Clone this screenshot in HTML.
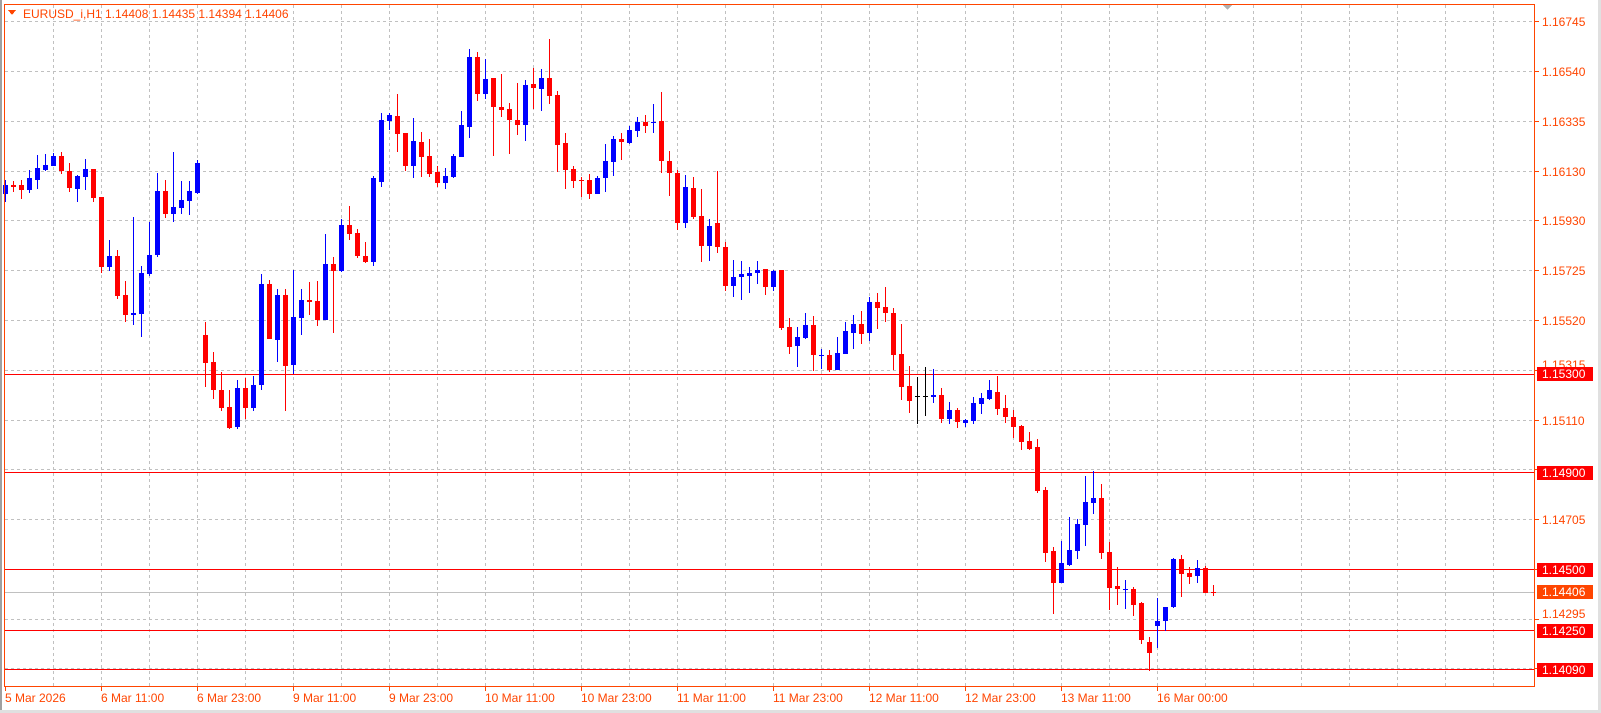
<!DOCTYPE html>
<html><head><meta charset="utf-8"><style>
html,body{margin:0;padding:0;background:#fff;}
body{width:1601px;height:713px;overflow:hidden;position:relative;font-family:"Liberation Sans",Tahoma,sans-serif;}
svg{position:absolute;left:0;top:0;}
text{font-family:"Liberation Sans",Tahoma,sans-serif;font-size:12px;}
</style></head><body>
<svg width="1601" height="713" viewBox="0 0 1601 713" xmlns="http://www.w3.org/2000/svg" shape-rendering="crispEdges">
<rect x="0" y="0" width="2" height="713" fill="#a0a0a0"/>
<rect x="1598" y="0" width="3" height="713" fill="#e0e0e0"/>
<rect x="0" y="710" width="1601" height="3" fill="#e0e0e0"/>
<g stroke="#c0c0c0" stroke-width="1" stroke-dasharray="3 3" fill="none">
<path d="M53.5 5V687M101.5 5V687M149.5 5V687M197.5 5V687M245.5 5V687M293.5 5V687M341.5 5V687M389.5 5V687M437.5 5V687M485.5 5V687M533.5 5V687M581.5 5V687M629.5 5V687M677.5 5V687M725.5 5V687M773.5 5V687M821.5 5V687M869.5 5V687M917.5 5V687M965.5 5V687M1013.5 5V687M1061.5 5V687M1109.5 5V687M1157.5 5V687M1205.5 5V687M1253.5 5V687M1301.5 5V687M1349.5 5V687M1397.5 5V687M1445.5 5V687M1493.5 5V687"/>
<path d="M5 21.5H1535M5 71.5H1535M5 121.5H1535M5 171.5H1535M5 220.5H1535M5 270.5H1535M5 320.5H1535M5 370.5H1535M5 420.5H1535M5 469.5H1535M5 519.5H1535M5 569.5H1535M5 619.5H1535M5 668.5H1535"/>
</g>
<rect x="5" y="374" width="1530" height="1" fill="#ff0000"/>
<rect x="5" y="472" width="1530" height="1" fill="#ff0000"/>
<rect x="5" y="569" width="1530" height="1" fill="#ff0000"/>
<rect x="5" y="592" width="1530" height="1" fill="#c0c0c0"/>
<rect x="5" y="630" width="1530" height="1" fill="#ff0000"/>
<rect x="5" y="669" width="1530" height="1" fill="#ff0000"/>
<g fill="#0000ff">
<path d="M5 180h1v22h-1zM3 185h5v9h-5z"/>
<path d="M29 170h1v23h-1zM27 178h5v12h-5z"/>
<path d="M37 155h1v34h-1zM35 168h5v12h-5z"/>
<path d="M45 154h1v17h-1zM43 165h5v5h-5z"/>
<path d="M53 153h1v13h-1zM51 156h5v10h-5z"/>
<path d="M77 175h1v27h-1zM75 176h5v13h-5z"/>
<path d="M85 159h1v31h-1zM83 169h5v8h-5z"/>
<path d="M109 240h1v31h-1zM107 256h5v11h-5z"/>
<path d="M133 217h1v108h-1zM131 313h5v2h-5z"/>
<path d="M141 266h1v71h-1zM139 273h5v41h-5z"/>
<path d="M149 222h1v54h-1zM147 255h5v19h-5z"/>
<path d="M157 173h1v84h-1zM155 191h5v64h-5z"/>
<path d="M173 152h1v70h-1zM171 207h5v7h-5z"/>
<path d="M181 181h1v33h-1zM179 200h5v8h-5z"/>
<path d="M189 181h1v34h-1zM187 191h5v10h-5z"/>
<path d="M197 160h1v34h-1zM195 163h5v30h-5z"/>
<path d="M237 380h1v49h-1zM235 388h5v39h-5z"/>
<path d="M253 376h1v35h-1zM251 385h5v23h-5z"/>
<path d="M261 274h1v116h-1zM259 284h5v101h-5z"/>
<path d="M277 289h1v73h-1zM275 295h5v45h-5z"/>
<path d="M293 270h1v104h-1zM291 317h5v48h-5z"/>
<path d="M301 289h1v46h-1zM299 300h5v18h-5z"/>
<path d="M325 234h1v86h-1zM323 264h5v56h-5z"/>
<path d="M341 219h1v53h-1zM339 225h5v46h-5z"/>
<path d="M373 176h1v90h-1zM371 178h5v84h-5z"/>
<path d="M381 113h1v74h-1zM379 120h5v62h-5z"/>
<path d="M389 113h1v17h-1zM387 115h5v6h-5z"/>
<path d="M413 118h1v60h-1zM411 141h5v25h-5z"/>
<path d="M445 168h1v21h-1zM443 176h5v7h-5z"/>
<path d="M453 154h1v24h-1zM451 156h5v21h-5z"/>
<path d="M461 111h1v46h-1zM459 125h5v32h-5z"/>
<path d="M469 49h1v89h-1zM467 57h5v70h-5z"/>
<path d="M485 59h1v40h-1zM483 79h5v15h-5z"/>
<path d="M525 80h1v61h-1zM523 85h5v40h-5z"/>
<path d="M541 69h1v42h-1zM539 78h5v11h-5z"/>
<path d="M597 176h1v18h-1zM595 178h5v16h-5z"/>
<path d="M605 144h1v48h-1zM603 161h5v17h-5z"/>
<path d="M613 136h1v40h-1zM611 139h5v23h-5z"/>
<path d="M629 126h1v18h-1zM627 130h5v13h-5z"/>
<path d="M637 117h1v20h-1zM635 122h5v9h-5z"/>
<path d="M653 104h1v29h-1zM651 122h5v1h-5z"/>
<path d="M685 175h1v53h-1zM683 187h5v36h-5z"/>
<path d="M709 219h1v42h-1zM707 226h5v20h-5z"/>
<path d="M733 260h1v37h-1zM731 277h5v9h-5z"/>
<path d="M741 261h1v39h-1zM739 274h5v3h-5z"/>
<path d="M749 267h1v26h-1zM747 273h5v3h-5z"/>
<path d="M757 261h1v23h-1zM755 270h5v3h-5z"/>
<path d="M773 270h1v21h-1zM771 271h5v16h-5z"/>
<path d="M797 327h1v40h-1zM795 337h5v9h-5z"/>
<path d="M805 313h1v26h-1zM803 325h5v13h-5z"/>
<path d="M821 349h1v20h-1zM819 355h5v1h-5z"/>
<path d="M837 337h1v33h-1zM835 353h5v17h-5z"/>
<path d="M845 322h1v32h-1zM843 331h5v23h-5z"/>
<path d="M853 315h1v34h-1zM851 324h5v9h-5z"/>
<path d="M869 297h1v44h-1zM867 302h5v31h-5z"/>
<path d="M933 369h1v34h-1zM931 395h5v2h-5z"/>
<path d="M949 402h1v22h-1zM947 410h5v9h-5z"/>
<path d="M965 419h1v8h-1zM963 420h5v3h-5z"/>
<path d="M973 397h1v27h-1zM971 403h5v18h-5z"/>
<path d="M981 393h1v21h-1zM979 398h5v6h-5z"/>
<path d="M989 380h1v20h-1zM987 390h5v9h-5z"/>
<path d="M1061 541h1v42h-1zM1059 563h5v20h-5z"/>
<path d="M1069 517h1v49h-1zM1067 550h5v15h-5z"/>
<path d="M1077 519h1v40h-1zM1075 524h5v27h-5z"/>
<path d="M1085 476h1v70h-1zM1083 502h5v23h-5z"/>
<path d="M1093 471h1v43h-1zM1091 498h5v5h-5z"/>
<path d="M1125 580h1v29h-1zM1123 589h5v1h-5z"/>
<path d="M1157 598h1v50h-1zM1155 621h5v5h-5z"/>
<path d="M1165 607h1v24h-1zM1163 607h5v14h-5z"/>
<path d="M1173 558h1v50h-1zM1171 559h5v48h-5z"/>
<path d="M1197 560h1v23h-1zM1195 568h5v8h-5z"/>
</g>
<g fill="#ff0000">
<path d="M13 181h1v11h-1zM11 185h5v2h-5z"/>
<path d="M21 180h1v19h-1zM19 185h5v5h-5z"/>
<path d="M61 152h1v22h-1zM59 156h5v15h-5z"/>
<path d="M69 163h1v29h-1zM67 171h5v17h-5z"/>
<path d="M93 169h1v33h-1zM91 169h5v29h-5z"/>
<path d="M101 197h1v76h-1zM99 197h5v70h-5z"/>
<path d="M117 250h1v49h-1zM115 256h5v40h-5z"/>
<path d="M125 281h1v41h-1zM123 295h5v20h-5z"/>
<path d="M165 180h1v38h-1zM163 191h5v23h-5z"/>
<path d="M205 322h1v65h-1zM203 335h5v28h-5z"/>
<path d="M213 352h1v47h-1zM211 362h5v28h-5z"/>
<path d="M221 372h1v39h-1zM219 390h5v18h-5z"/>
<path d="M229 390h1v39h-1zM227 407h5v21h-5z"/>
<path d="M245 378h1v41h-1zM243 388h5v20h-5z"/>
<path d="M269 280h1v59h-1zM267 284h5v55h-5z"/>
<path d="M285 289h1v122h-1zM283 295h5v71h-5z"/>
<path d="M309 282h1v33h-1zM307 300h5v2h-5z"/>
<path d="M317 281h1v45h-1zM315 301h5v19h-5z"/>
<path d="M333 257h1v76h-1zM331 264h5v7h-5z"/>
<path d="M349 206h1v34h-1zM347 225h5v9h-5z"/>
<path d="M357 229h1v29h-1zM355 233h5v23h-5z"/>
<path d="M365 242h1v21h-1zM363 256h5v6h-5z"/>
<path d="M397 94h1v58h-1zM395 116h5v18h-5z"/>
<path d="M405 133h1v38h-1zM403 133h5v33h-5z"/>
<path d="M421 132h1v45h-1zM419 142h5v15h-5z"/>
<path d="M429 139h1v38h-1zM427 156h5v18h-5z"/>
<path d="M437 166h1v21h-1zM435 172h5v11h-5z"/>
<path d="M477 52h1v49h-1zM475 57h5v37h-5z"/>
<path d="M493 78h1v78h-1zM491 78h5v29h-5z"/>
<path d="M501 74h1v43h-1zM499 107h5v3h-5z"/>
<path d="M509 103h1v51h-1zM507 109h5v11h-5z"/>
<path d="M517 83h1v52h-1zM515 120h5v5h-5z"/>
<path d="M533 68h1v41h-1zM531 84h5v4h-5z"/>
<path d="M549 39h1v65h-1zM547 78h5v18h-5z"/>
<path d="M557 91h1v81h-1zM555 95h5v50h-5z"/>
<path d="M565 133h1v56h-1zM563 143h5v27h-5z"/>
<path d="M573 166h1v22h-1zM571 169h5v12h-5z"/>
<path d="M581 177h1v20h-1zM579 180h5v1h-5z"/>
<path d="M589 174h1v25h-1zM587 180h5v14h-5z"/>
<path d="M621 133h1v27h-1zM619 139h5v3h-5z"/>
<path d="M645 115h1v18h-1zM643 122h5v4h-5z"/>
<path d="M661 92h1v81h-1zM659 121h5v40h-5z"/>
<path d="M669 151h1v45h-1zM667 161h5v12h-5z"/>
<path d="M677 170h1v60h-1zM675 173h5v50h-5z"/>
<path d="M693 177h1v42h-1zM691 188h5v29h-5z"/>
<path d="M701 189h1v73h-1zM699 216h5v30h-5z"/>
<path d="M717 171h1v82h-1zM715 223h5v24h-5z"/>
<path d="M725 242h1v49h-1zM723 247h5v39h-5z"/>
<path d="M765 269h1v26h-1zM763 269h5v18h-5z"/>
<path d="M781 270h1v60h-1zM779 270h5v58h-5z"/>
<path d="M789 318h1v36h-1zM787 327h5v20h-5z"/>
<path d="M813 316h1v55h-1zM811 325h5v30h-5z"/>
<path d="M829 350h1v22h-1zM827 355h5v15h-5z"/>
<path d="M861 311h1v33h-1zM859 324h5v10h-5z"/>
<path d="M877 293h1v36h-1zM875 302h5v6h-5z"/>
<path d="M885 287h1v35h-1zM883 307h5v6h-5z"/>
<path d="M893 308h1v62h-1zM891 313h5v42h-5z"/>
<path d="M901 324h1v76h-1zM899 354h5v33h-5z"/>
<path d="M909 366h1v47h-1zM907 386h5v15h-5z"/>
<path d="M941 388h1v35h-1zM939 395h5v24h-5z"/>
<path d="M957 408h1v20h-1zM955 410h5v12h-5z"/>
<path d="M997 376h1v39h-1zM995 392h5v17h-5z"/>
<path d="M1005 395h1v28h-1zM1003 408h5v9h-5z"/>
<path d="M1013 410h1v28h-1zM1011 417h5v10h-5z"/>
<path d="M1021 425h1v25h-1zM1019 426h5v16h-5z"/>
<path d="M1029 432h1v18h-1zM1027 441h5v8h-5z"/>
<path d="M1037 439h1v54h-1zM1035 447h5v44h-5z"/>
<path d="M1045 487h1v75h-1zM1043 490h5v63h-5z"/>
<path d="M1053 547h1v67h-1zM1051 551h5v32h-5z"/>
<path d="M1101 484h1v75h-1zM1099 498h5v55h-5z"/>
<path d="M1109 542h1v68h-1zM1107 552h5v36h-5z"/>
<path d="M1117 567h1v38h-1zM1115 586h5v3h-5z"/>
<path d="M1133 587h1v29h-1zM1131 589h5v16h-5z"/>
<path d="M1141 602h1v42h-1zM1139 603h5v37h-5z"/>
<path d="M1149 637h1v34h-1zM1147 642h5v11h-5z"/>
<path d="M1181 555h1v42h-1zM1179 559h5v15h-5z"/>
<path d="M1189 567h1v17h-1zM1187 573h5v4h-5z"/>
<path d="M1205 566h1v27h-1zM1203 568h5v25h-5z"/>
<path d="M1213 585h1v11h-1zM1211 592h5v1h-5z"/>
</g>
<g fill="#000">
<path d="M917 377h1v47h-1zM915 396h5v1h-5z"/>
<path d="M925 367h1v49h-1zM923 396h5v1h-5z"/>
</g>
<!-- frame -->
<rect x="4.5" y="4.5" width="1530" height="682" fill="none" stroke="#ff4500" stroke-width="1"/>
<path d="M1223 5h9l-4.5 5z" fill="#b0b0b0"/>
<!-- title -->
<path d="M8 10h8l-4 5z" fill="#ff4500"/>
<text x="23" y="18" fill="#ff4500">EURUSD_i,H1</text>
<text x="105" y="18" fill="#ff4500">1.14408 1.14435 1.14394 1.14406</text>
<!-- price axis ticks -->
<g fill="#ff4500">
<rect x="1535" y="21" width="4" height="1"/><rect x="1535" y="71" width="4" height="1"/><rect x="1535" y="121" width="4" height="1"/><rect x="1535" y="171" width="4" height="1"/><rect x="1535" y="220" width="4" height="1"/><rect x="1535" y="270" width="4" height="1"/><rect x="1535" y="320" width="4" height="1"/><rect x="1535" y="370" width="4" height="1"/><rect x="1535" y="420" width="4" height="1"/><rect x="1535" y="469" width="4" height="1"/><rect x="1535" y="519" width="4" height="1"/><rect x="1535" y="569" width="4" height="1"/><rect x="1535" y="619" width="4" height="1"/><rect x="1535" y="668" width="4" height="1"/>
</g>
<g fill="#ff4500">
<text x="1542" y="26">1.16745</text>
<text x="1542" y="76">1.16540</text>
<text x="1542" y="126">1.16335</text>
<text x="1542" y="176">1.16130</text>
<text x="1542" y="225">1.15930</text>
<text x="1542" y="275">1.15725</text>
<text x="1542" y="325">1.15520</text>
<text x="1542" y="369">1.15315</text>
<text x="1542" y="425">1.15110</text>
<text x="1542" y="524">1.14705</text>
<text x="1542" y="618">1.14295</text>
</g>
<g>
<rect x="1537" y="367" width="56" height="14" fill="#ff0000"/>
<rect x="1537" y="466" width="56" height="14" fill="#ff0000"/>
<rect x="1537" y="563" width="56" height="14" fill="#ff0000"/>
<rect x="1537" y="585" width="56" height="14" fill="#ff4500"/>
<rect x="1537" y="624" width="56" height="14" fill="#ff0000"/>
<rect x="1537" y="663" width="56" height="14" fill="#ff0000"/>
</g>
<g fill="#fff">
<text x="1542" y="378">1.15300</text>
<text x="1542" y="477">1.14900</text>
<text x="1542" y="574">1.14500</text>
<text x="1542" y="596">1.14406</text>
<text x="1542" y="635">1.14250</text>
<text x="1542" y="674">1.14090</text>
</g>
<!-- time axis -->
<g fill="#ff4500">
<rect x="5" y="687" width="1" height="4"/><rect x="101" y="687" width="1" height="4"/><rect x="197" y="687" width="1" height="4"/><rect x="293" y="687" width="1" height="4"/><rect x="389" y="687" width="1" height="4"/><rect x="485" y="687" width="1" height="4"/><rect x="581" y="687" width="1" height="4"/><rect x="677" y="687" width="1" height="4"/><rect x="773" y="687" width="1" height="4"/><rect x="869" y="687" width="1" height="4"/><rect x="965" y="687" width="1" height="4"/><rect x="1061" y="687" width="1" height="4"/><rect x="1157" y="687" width="1" height="4"/>
<text x="5" y="702">5 Mar 2026</text>
<text x="101" y="702">6 Mar 11:00</text>
<text x="197" y="702">6 Mar 23:00</text>
<text x="293" y="702">9 Mar 11:00</text>
<text x="389" y="702">9 Mar 23:00</text>
<text x="485" y="702">10 Mar 11:00</text>
<text x="581" y="702">10 Mar 23:00</text>
<text x="677" y="702">11 Mar 11:00</text>
<text x="773" y="702">11 Mar 23:00</text>
<text x="869" y="702">12 Mar 11:00</text>
<text x="965" y="702">12 Mar 23:00</text>
<text x="1061" y="702">13 Mar 11:00</text>
<text x="1157" y="702">16 Mar 00:00</text>
</g>
</svg>
</body></html>
